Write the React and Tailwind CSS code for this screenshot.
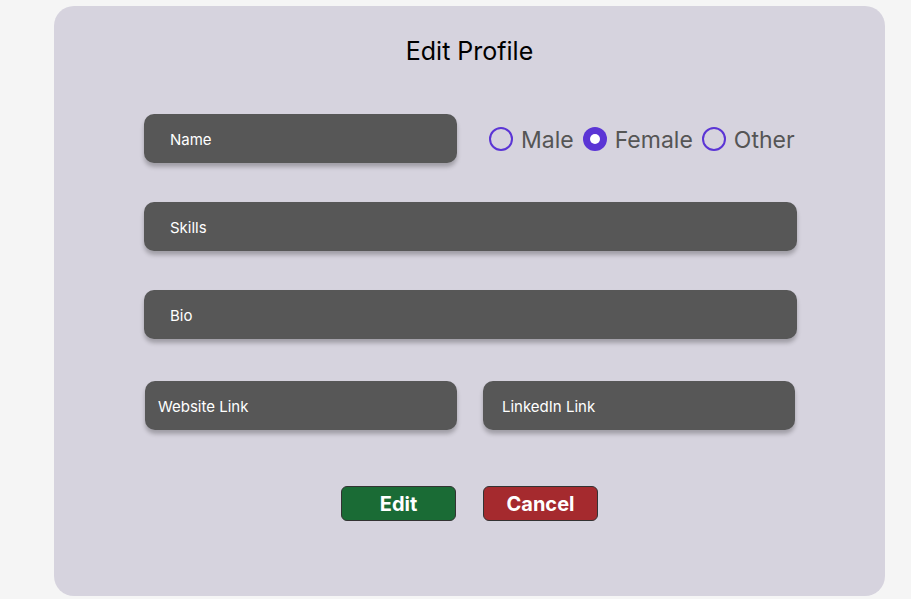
import React from "react";

function Field({ label, className = "", pad = "pl-[26px]" }) {
  return (
    <div
      className={`h-[49px] rounded-[10px] bg-[#575757] flex items-center pt-[3px] ${pad} text-white text-[15px] shadow-[0_4px_4px_rgba(0,0,0,0.25)] ${className}`}
    >
      {label}
    </div>
  );
}

function Radio({ label, checked }) {
  return (
    <div className="flex items-center gap-2">
      {checked ? (
        <span className="w-6 h-6 rounded-full bg-[#5b35d5] flex items-center justify-center">
          <span className="w-[10px] h-[10px] rounded-full bg-white" />
        </span>
      ) : (
        <span className="w-6 h-6 rounded-full border-2 border-[#5b35d5]" />
      )}
      <span className="text-[23px] text-[#555555] leading-none mt-[3px]">{label}</span>
    </div>
  );
}

export default function App() {
  return (
    <div
      className="w-[911px] h-[599px] bg-[#f5f5f5] pt-[6px] pl-[54px]"
      style={{ fontFamily: "Inter, 'Noto Sans', sans-serif" }}
    >
      <div className="w-[831px] h-[590px] rounded-[20px] bg-[#d6d3de] flex flex-col items-center pt-[29px]">
        <h1 className="text-[25px] leading-[32px] text-black">Edit Profile</h1>
        <div className="w-[653px] ml-[2px] mt-[47px] flex flex-col">
          <div className="flex items-center">
            <Field label="Name" className="w-[313px]" />
            <div className="flex items-center gap-[9px] ml-[32px] mt-[1px]">
              <Radio label="Male" />
              <Radio label="Female" checked />
              <Radio label="Other" />
            </div>
          </div>
          <Field label="Skills" className="mt-[39px]" />
          <Field label="Bio" className="mt-[39px]" />
          <div className="mt-[42px] flex gap-[26px] pl-[1px]">
            <Field label="Website Link" pad="pl-[13px]" className="w-[312px]" />
            <Field label="LinkedIn Link" pad="pl-[19px]" className="w-[312px]" />
          </div>
        </div>
        <div className="mt-[56px] flex gap-[27px]">
          <button className="w-[115px] h-[35px] rounded-[6px] bg-[#1a6b35] border border-[#333333] text-white font-bold text-[20px] leading-none">
            Edit
          </button>
          <button className="w-[115px] h-[35px] rounded-[6px] bg-[#a52a2e] border border-[#333333] text-white font-bold text-[20px] leading-none">
            Cancel
          </button>
        </div>
      </div>
    </div>
  );
}
